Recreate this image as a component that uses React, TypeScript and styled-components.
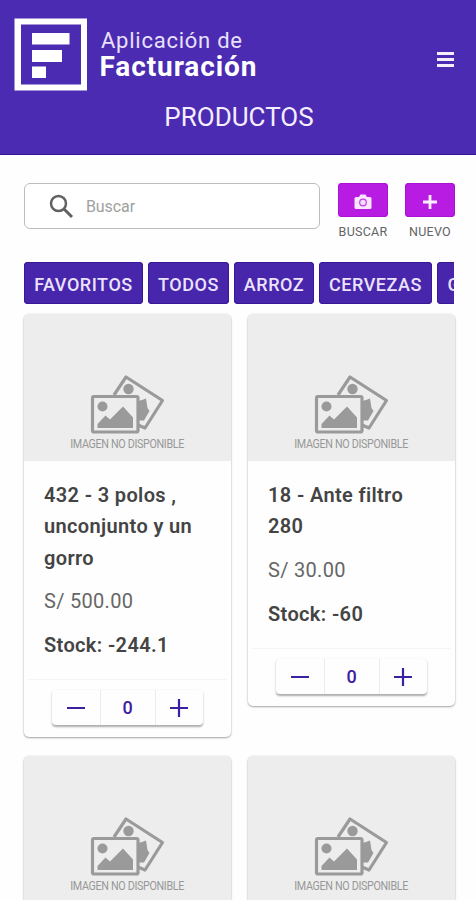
import React from "react";
import styled, { createGlobalStyle } from "styled-components";

const GlobalStyle = createGlobalStyle`
  * { box-sizing: border-box; }
  body { margin: 0; background: #fefefe; font-family: Roboto, "Liberation Sans", sans-serif; }
  button { font-family: inherit; border: 0; padding: 0; margin: 0; }
`;

const Screen = styled.div`
  width: 476px;
  height: 900px;
  overflow: hidden;
  background: #fefefe;
`;

const Header = styled.header`
  height: 155px;
  padding: 18px 22px 0 14px;
  background: #4b2bb1;
  border-bottom: 1px solid #3a1599;
  color: #f4eeff;
`;

const HeaderRow = styled.div`
  display: flex;
  height: 73px;
`;

const Brand = styled.div`
  flex: 1;
  padding: 10px 0 0 13px;
`;

const BrandTop = styled.div`
  padding-left: 1px;
  font-size: 22px;
  line-height: 26px;
  letter-spacing: 0.75px;
  color: #e9e0fb;
`;

const BrandName = styled.div`
  font-size: 28px;
  line-height: 26px;
  font-weight: 700;
  letter-spacing: 0.9px;
  transform: translateX(-0.5px);
  color: #fff;
`;

const MenuButton = styled.button`
  display: flex;
  flex-direction: column;
  gap: 3px;
  width: 17px;
  height: 16px;
  margin-top: 34px;
  background: none;
`;

const MenuBar = styled.span`
  width: 17px;
  height: 3px;
  background: #f4eeff;
`;

const PageTitle = styled.h1`
  margin: 10px 0 0 10px;
  font-size: 26px;
  line-height: 32px;
  font-weight: 400;
  text-align: center;
`;

const Content = styled.main`
  padding: 28px 21px 0 24px;
`;

const SearchRow = styled.div`
  display: flex;
  height: 79px;
`;

const SearchBox = styled.div`
  display: flex;
  flex: none;
  align-items: center;
  width: 296px;
  height: 46px;
  padding-left: 24px;
  gap: 12px;
  margin-right: 18px;
  border: 1.5px solid #bdbdbd;
  border-radius: 6px;
  background: #fff;
  color: #a0a0a0;
  font-size: 16px;
  letter-spacing: -0.1px;
`;

const Action = styled.div`
  display: flex;
  flex: none;
  flex-direction: column;
  align-items: center;
  width: 50px;
  font-size: 12.5px;
  line-height: 16px;
  letter-spacing: 0.25px;
  color: #646464;
  & + & { margin-left: 17px; }
`;

const ActionButton = styled.button`
  display: flex;
  align-items: center;
  justify-content: center;
  width: 50px;
  height: 34px;
  margin-bottom: 7px;
  padding-top: 4px;
  border-radius: 4px;
  background: #b81ce3;
  box-shadow: inset 0 0 0 1px #a912d2;
`;

const Chips = styled.nav`
  display: flex;
  gap: 5px;
  height: 42px;
  overflow: hidden;
  margin-right: 1px;
`;

const Chip = styled.button<{ $w: number }>`
  flex: none;
  width: ${(p) => p.$w}px;
  height: 42px;
  border-radius: 4px;
  background: #4726ac;
  box-shadow: inset 0 0 0 1px #371997;
  color: #ebe2fb;
  font-size: 18px;
  font-weight: 500;
  letter-spacing: 0.55px;
  padding-top: 3px;
  white-space: nowrap;
`;

const Grid = styled.section`
  display: grid;
  grid-template-columns: 207px 207px;
  column-gap: 17px;
  row-gap: 19px;
  align-items: start;
  margin-top: 10px;
`;

const Card = styled.article`
  border-radius: 5px;
  background: #fefefe;
  overflow: hidden;
  box-shadow: 0 1px 2px rgba(0, 0, 0, 0.34), 0 0 2px rgba(0, 0, 0, 0.1);
`;

const Picture = styled.div`
  display: flex;
  flex-direction: column;
  align-items: center;
  height: 147px;
  padding-top: 60px;
  background: #ededed;
  color: #989898;
  font-size: 12.5px;
  line-height: 14px;
`;

const Caption = styled.div`
  margin-top: 3px;
  white-space: nowrap;
  letter-spacing: -0.4px;
  transform: scaleX(0.86);
`;

const Details = styled.div`
  padding: 19px 20px 18px 20px;
  color: #444;
  font-size: 20px;
  line-height: 31.3px;
`;

const Name = styled.div`
  font-weight: 600;
  letter-spacing: 0.36px;
`;

const Price = styled.div`
  margin-top: 12px;
  color: #666;
  letter-spacing: 0.3px;
`;

const Stock = styled(Name)`
  margin-top: 13px;
`;

const Footer = styled.div`
  display: flex;
  justify-content: center;
  height: 58px;
  margin: 0 5px 0 4px;
  padding-top: 10px;
  border-top: 1px solid #f4f4f4;
`;

const Stepper = styled.div`
  display: grid;
  grid-template-columns: 48px 55px 48px;
  width: 151px;
  height: 35px;
  border-radius: 4px;
  box-shadow: 0 1.5px 2px rgba(0, 0, 0, 0.32);
  color: #3b209f;
  font-size: 18px;
  font-weight: 500;
`;

const StepCell = styled.div`
  display: flex;
  align-items: center;
  justify-content: center;
  & + & { border-left: 1px solid #ececec; }
`;

const Logo = () => (
  <svg width="73" height="73" viewBox="0 0 73 73" fill="#fff">
    <path d="M0.5.5h72.5v72H.5zM7 6.5v60h60v-60z" fillRule="evenodd" />
    <path d="M18 15h37.500v11.500H18zM18 32h30v12H18zM18 48.500h14V60H18z" />
  </svg>
);

const SearchIcon = () => (
  <svg width="25" height="25" viewBox="0 0 25 25" fill="none" stroke="#616161" strokeWidth="2.500">
    <circle cx="9.500" cy="9.500" r="7.500" />
    <path d="M15 15l8 8" strokeWidth="3" />
  </svg>
);

const CameraIcon = () => (
  <svg width="18" height="16" viewBox="0 0 18 16">
    <path d="M2 3h3l1.500-2.500h5L13 3h3q1.500 0 1.500 1.500v9q0 1.500-1.500 1.500H2Q.5 15 .5 13.500v-9Q.5 3 2 3z" fill="#fbe6ff" />
    <circle cx="9" cy="8.500" r="3.300" fill="#f7dcff" stroke="#c13ce6" strokeWidth="1.200" />
  </svg>
);

const AddIcon = () => (
  <svg width="16" height="16" viewBox="0 0 16 16" stroke="#fff0ff" strokeWidth="2.800">
    <path d="M8 1v14M1 8h14" />
  </svg>
);

const MissingPicture = () => (
  <svg width="76" height="60" viewBox="0 0 76 60" fill="none" stroke="#9a9a9a" strokeWidth="3.200" strokeLinejoin="round">
    <path d="M24 21L36 3 72.500 26.500 55 54 48 51" />
    <circle cx="38.500" cy="15" r="5.200" fill="#9a9a9a" stroke="none" />
    <path d="M48 27l4-1 4-1.500 1.500 9.500 2 3-5.500 9.500H48z" fill="#9a9a9a" stroke="none" />
    <rect x="2.500" y="22.500" width="45.500" height="35.500" rx="1.500" fill="#ededed" />
    <circle cx="12.500" cy="32.500" r="5" fill="#9a9a9a" stroke="none" />
    <path d="M7.500 54v-4l8-8.500 4.500 4L33 32.500l10 11V54z" fill="#9a9a9a" stroke="none" />
  </svg>
);

const StepIcon = ({ plus = false }: { plus?: boolean }) => (
  <svg width="18" height="18" viewBox="0 0 18 18" stroke="#3b209f" strokeWidth="2.200">
    <path d={plus ? "M0 9h18M9 0v18" : "M0 9h18"} />
  </svg>
);

const NoImage = () => (
  <Picture>
    <MissingPicture />
    <Caption>IMAGEN NO DISPONIBLE</Caption>
  </Picture>
);

const products = [
  { name: "432 - 3 polos , unconjunto y un gorro", price: "S/ 500.00", stock: "Stock: -244.1" },
  { name: "18 - Ante filtro 280", price: "S/ 30.00", stock: "Stock: -60" },
];

const categories: [string, number][] = [
  ["FAVORITOS", 119],
  ["TODOS", 81],
  ["ARROZ", 80],
  ["CERVEZAS", 113],
  ["GASEOSAS", 117],
];

export default function App() {
  return (
    <Screen>
      <GlobalStyle />
      <Header>
        <HeaderRow>
          <Logo />
          <Brand>
            <BrandTop>Aplicación de</BrandTop>
            <BrandName>Facturación</BrandName>
          </Brand>
          <MenuButton aria-label="Menú">
            <MenuBar />
            <MenuBar />
            <MenuBar />
          </MenuButton>
        </HeaderRow>
        <PageTitle>PRODUCTOS</PageTitle>
      </Header>
      <Content>
        <SearchRow>
          <SearchBox>
            <SearchIcon />
            Buscar
          </SearchBox>
          <Action>
            <ActionButton aria-label="Buscar con cámara"><CameraIcon /></ActionButton>
            BUSCAR
          </Action>
          <Action>
            <ActionButton aria-label="Nuevo producto"><AddIcon /></ActionButton>
            NUEVO
          </Action>
        </SearchRow>
        <Chips>
          {categories.map(([label, w]) => (
            <Chip key={label} $w={w}>{label}</Chip>
          ))}
        </Chips>
        <Grid>
          {products.map((p) => (
            <Card key={p.name}>
              <NoImage />
              <Details>
                <Name>{p.name}</Name>
                <Price>{p.price}</Price>
                <Stock>{p.stock}</Stock>
              </Details>
              <Footer>
                <Stepper>
                  <StepCell><StepIcon /></StepCell>
                  <StepCell>0</StepCell>
                  <StepCell><StepIcon plus /></StepCell>
                </Stepper>
              </Footer>
            </Card>
          ))}
          <Card><NoImage /></Card>
          <Card><NoImage /></Card>
        </Grid>
      </Content>
    </Screen>
  );
}
